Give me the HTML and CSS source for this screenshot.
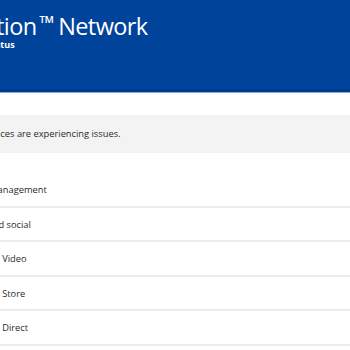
FILE: index.html
```html
<!DOCTYPE html>
<html lang="en">
<head>
  <meta charset="UTF-8" />
  <title>PlayStation Network Service Status</title>
  <link rel="stylesheet" href="styles.css">
</head>
<body>
  <header class="masthead">
    <h1 class="title">PlayStation<span class="tm">™</span>Network</h1>
    <div class="subtitle">Service status</div>
  </header>

  <section class="notice">
    <div class="wrap">Some services are experiencing issues.</div>
  </section>

  <ul class="services">
    <li class="service"><div class="wrap">Account management</div></li>
    <li class="service"><div class="wrap">Gaming and social</div></li>
    <li class="service"><div class="wrap">PlayStation Video</div></li>
    <li class="service"><div class="wrap">PlayStation Store</div></li>
    <li class="service"><div class="wrap">PlayStation Direct</div></li>
  </ul>
</body>
</html>
```

FILE: styles.css
```css
html, body {
  margin: 0;
  padding: 0;
  background: white;
  color: #2b2b2b;
  font-family: 'Open Sans', 'Noto Sans', sans-serif;
  overflow: hidden;
}

.wrap {
  margin-left: -48.5px;
  white-space: nowrap;
}

.notice .wrap {
  margin-left: -47px;
}

.masthead {
  background: #00439b;
  color: white;
  height: 89px;
  border-bottom: 3px solid #003b8c;
  box-shadow: 0 1px 0 #86a9d6;
  margin-bottom: 23px;
  white-space: nowrap;
}

.title {
  margin: 0 0 0 -79px;
  padding-top: 10px;
  font-size: 23.5px;
  font-weight: 400;
  line-height: 26px;
  letter-spacing: -0.6px;
}

.tm {
  font-size: 20px;
  vertical-align: 5px;
  margin: 0 4px 0 3px;
}

.subtitle {
  margin-left: -48px;
  font-size: 9px;
  font-weight: 700;
  line-height: 12px;
}

.notice {
  background: #f3f3f3;
  font-size: 9.3px;
  line-height: 38px;
  margin-bottom: 20px;
}

.services {
  list-style: none;
  margin: 0;
  padding: 0;
}

.service {
  font-size: 9.3px;
  line-height: 16px;
  padding: 9.25px 0 7.25px;
  border-bottom: 2px solid #ececec;
}
```
